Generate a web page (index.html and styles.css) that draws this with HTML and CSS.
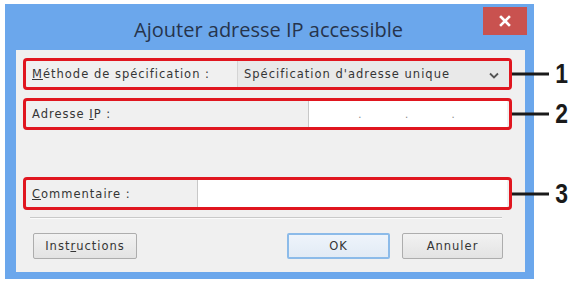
FILE: index.html
```html
<!DOCTYPE html>
<html lang="fr">
<head>
<meta charset="utf-8">
<title>Ajouter adresse IP accessible</title>
<link rel="stylesheet" href="styles.css">
</head>
<body>
<div class="window">
  <div class="titlebar">
    <span class="title">Ajouter adresse IP accessible</span>
    <div class="close">
      <svg width="12" height="12" viewBox="0 0 12 12"><path d="M2 2 L10 10 M10 2 L2 10" stroke="#fff" stroke-width="2.6" stroke-linecap="square"/></svg>
    </div>
  </div>
  <div class="content">
    <div class="box">
      <div class="label"><span><u>M</u>éthode de spécification :</span></div>
      <div class="combo">
        <span>Spécification d'adresse unique</span>
        <svg class="chev" width="10" height="7" viewBox="0 0 10 7"><path d="M1 1.5 L5 5.5 L9 1.5" fill="none" stroke="#555" stroke-width="1.8"/></svg>
      </div>
      <div class="callout"><span class="line"></span><span class="num">1</span></div>
    </div>
    <div class="box">
      <div class="label label2"><span>Adresse <u>I</u>P :</span></div>
      <div class="field ip"><span>.</span><span>.</span><span>.</span></div>
      <div class="callout"><span class="line"></span><span class="num">2</span></div>
    </div>
    <div class="box box3">
      <div class="label label3"><span><u>C</u>ommentaire :</span></div>
      <div class="field"></div>
      <div class="callout"><span class="line"></span><span class="num">3</span></div>
    </div>
    <div class="sep"></div>
    <div class="buttons">
      <button class="btn instr">Inst<u>r</u>uctions</button>
      <span class="spacer"></span>
      <button class="btn ok">OK</button>
      <button class="btn">Annuler</button>
    </div>
  </div>
</div>
</body>
</html>
```

FILE: styles.css
```css
html, body {
  margin: 0;
  padding: 0;
  background: #ffffff;
}
body {
  width: 579px;
  height: 290px;
  overflow: hidden;
}
.window {
  margin: 4px 0 0 5px;
  width: 529px;
  height: 275px;
  box-sizing: border-box;
  background: #6ba7ec;
  padding: 0 9px 7px 11px;
  display: flex;
  flex-direction: column;
}
.titlebar {
  height: 46px;
  position: relative;
  display: flex;
  align-items: center;
  justify-content: center;
}
.title {
  font-family: "Open Sans", "Noto Sans", sans-serif;
  font-size: 20px;
  color: #26344c;
  margin-top: 4px;
  margin-left: -4px;
}
.close {
  position: absolute;
  right: -2px;
  top: 3px;
  width: 44px;
  height: 28px;
  background: #c9524f;
  display: flex;
  align-items: center;
  justify-content: center;
}
.content {
  flex: 1;
  background: #f0f0f0;
  padding: 8px 13px 0 7px;
  display: flex;
  flex-direction: column;
  font-family: "DejaVu Sans", sans-serif;
  font-size: 11.5px;
  letter-spacing: 1px;
  color: #353535;
}
.box {
  position: relative;
  height: 32px;
  box-sizing: border-box;
  border: 3px solid #e0161f;
  border-radius: 4px;
  display: flex;
  align-items: stretch;
  margin-bottom: 8px;
}
.box3 {
  margin-top: 39px;
  height: 33px;
  margin-bottom: 7px;
}
.label {
  width: 211px;
  padding-left: 6px;
  box-sizing: border-box;
  display: flex;
  align-items: center;
  flex-shrink: 0;
}
.label2 {
  width: 282px;
}
.label3 {
  width: 171px;
}
.combo {
  flex: 1;
  border-left: 1px solid #d4d4d4;
  background: #e9e9e9;
  display: flex;
  align-items: center;
  justify-content: space-between;
  padding: 0 10px 0 6px;
}
.chev {
  margin-top: 2px;
}
.field {
  flex: 1;
  background: #ffffff;
  border-left: 1px solid #c8c8c8;
  margin-right: 2px;
}
.ip {
  display: flex;
  align-items: center;
  justify-content: space-around;
  padding: 0 30px 0 28px;
  color: #888;
  font-size: 10px;
}
.callout {
  position: absolute;
  left: 100%;
  top: 50%;
  margin-left: 3px;
  display: flex;
  align-items: center;
  transform: translateY(-50%);
}
.line {
  display: block;
  width: 37px;
  height: 3px;
  background: #1a1a1a;
}
.num {
  font-family: "Liberation Sans", Arial, sans-serif;
  font-weight: bold;
  font-size: 27px;
  letter-spacing: 0;
  color: #1a1a1a;
  margin-left: 5px;
  transform: scaleX(0.85);
  line-height: 1;
}
.sep {
  height: 1px;
  background: #c9c9c9;
  border-bottom: 1px solid #fbfbfb;
  margin: 0 10px 0 7px;
}
.buttons {
  display: flex;
  align-items: center;
  margin-top: 14px;
  padding: 0 9px 0 10px;
}
.spacer {
  flex: 1;
}
.btn {
  height: 26px;
  width: 101px;
  box-sizing: border-box;
  font-family: "DejaVu Sans", sans-serif;
  font-size: 11.5px;
  letter-spacing: 1px;
  color: #353535;
  background: linear-gradient(#f2f2f2, #e3e3e3);
  border: 1px solid #adadad;
  border-radius: 2px;
  padding: 0;
  margin-left: 12px;
}
.instr {
  width: 104px;
  margin-left: 0;
}
.ok {
  width: 103px;
  border: 2px solid #8cbbe9;
  background: linear-gradient(#eef4fb, #e2ebf5);
}
```
